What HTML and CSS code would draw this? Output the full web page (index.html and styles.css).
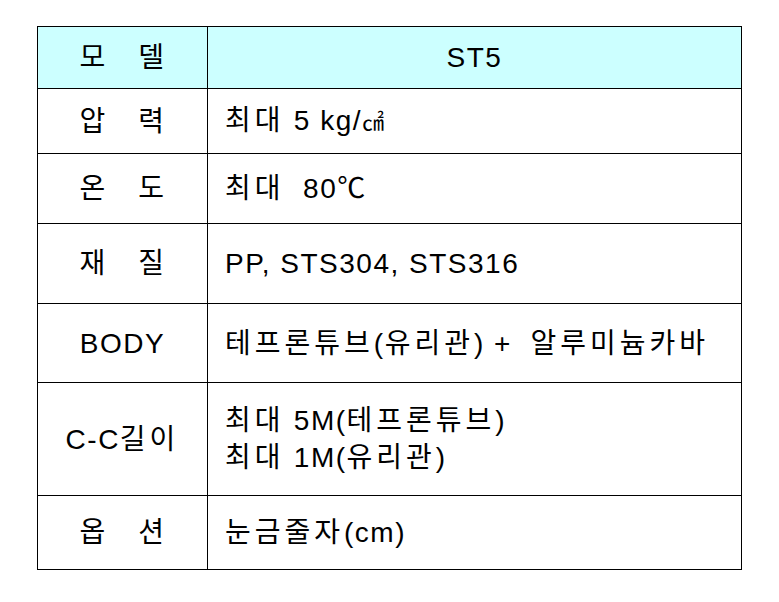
FILE: index.html
```html
<!DOCTYPE html>
<html lang="ko">
<head>
<meta charset="utf-8">
<title>ST5 사양</title>
<link rel="stylesheet" href="styles.css">
</head>
<body>
<div class="page">
  <table class="spec">
    <colgroup><col class="col-label"><col class="col-value"></colgroup>
    <tr class="head r0"><td class="label"><span class="spaced">모 델</span></td><td class="value center">ST5</td></tr>
    <tr class="r1"><td class="label"><span class="spaced">압 력</span></td><td class="value"><span class="ko">최대</span>&nbsp;5 kg/<span class="unit">㎠</span></td></tr>
    <tr class="r2"><td class="label"><span class="spaced">온 도</span></td><td class="value"><span class="ko">최대</span>&nbsp; 80℃</td></tr>
    <tr class="r3"><td class="label"><span class="spaced">재 질</span></td><td class="value">PP, STS304, STS316</td></tr>
    <tr class="r4"><td class="label">BODY</td><td class="value"><span class="ko">테프론튜브</span>(<span class="ko">유리관</span>) +&nbsp; <span class="ko">알루미늄카바</span></td></tr>
    <tr class="r5"><td class="label">C-C<span class="ko">길이</span></td><td class="value"><span class="ko">최대</span>&nbsp;5M(<span class="ko">테프론튜브</span>)<br><span class="ko">최대</span>&nbsp;1M(<span class="ko">유리관</span>)</td></tr>
    <tr class="r6"><td class="label"><span class="spaced">옵 션</span></td><td class="value"><span class="ko">눈금줄자</span>(cm)</td></tr>
  </table>
</div>
</body>
</html>
```

FILE: styles.css
```css
body {
  margin: 0;
  background: #ffffff;
  color: #000000;
  font-family: "Liberation Sans", "Noto Sans CJK KR", sans-serif;
}
.page {
  padding: 26px 0 0 37px;
}
.spec {
  border-collapse: collapse;
  table-layout: fixed;
  width: 705px;
  font-size: 28px;
  line-height: 37px;
  letter-spacing: 1.5px;
}
.col-label { width: 170px; }
.spec td {
  border: 1px solid #000000;
  padding: 0;
  vertical-align: middle;
}
.spec .head td { background: #ccffff; }
.spec .label { text-align: center; }
.spec .value { padding-left: 17px; text-align: left; }
.spec .value.center { padding-left: 0; text-align: center; }
.spaced { word-spacing: 22px; }
.ko { letter-spacing: 4px; }
.unit { font-size: 22px; letter-spacing: 0; }
.r0 { height: 62px; }
.r1 { height: 65px; }
.r2 { height: 70px; }
.r3 { height: 80px; }
.r4 { height: 79px; }
.r5 { height: 113px; }
.r6 { height: 74px; }
```
